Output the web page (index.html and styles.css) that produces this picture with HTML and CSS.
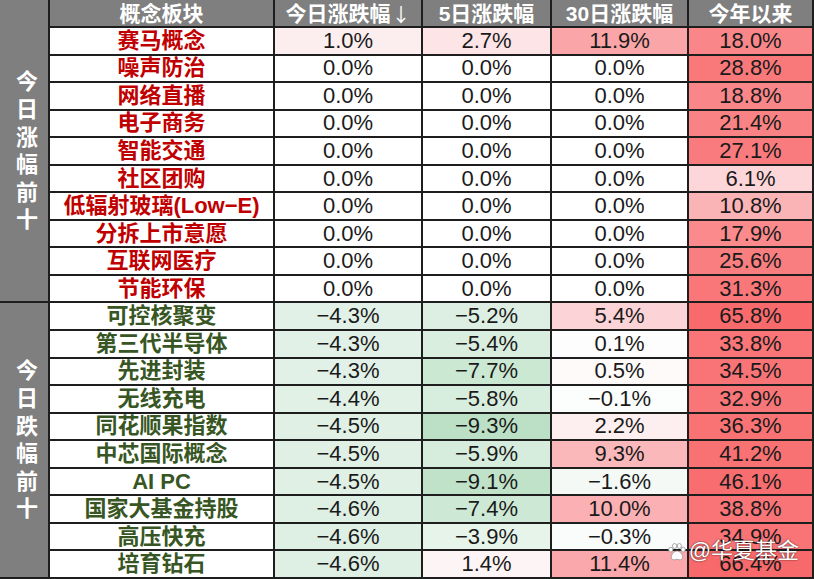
FILE: index.html
```html
<!DOCTYPE html>
<html lang="zh-CN">
<head>
<meta charset="utf-8">
<title>概念板块涨跌幅</title>
<link rel="stylesheet" href="styles.css">
</head>
<body>
<div class="sheet">
  <div class="group group-top">今日涨幅前十</div>
  <div class="group group-bottom">今日跌幅前十</div>

  <div class="hd">概念板块</div>
  <div class="hd">今日涨跌幅<span class="arrow">↓</span></div>
  <div class="hd">5日涨跌幅</div>
  <div class="hd">30日涨跌幅</div>
  <div class="hd">今年以来</div>

  <div class="name up">赛马概念</div>
  <div class="num" style="background:rgb(252,237,239)">1.0%</div>
  <div class="num" style="background:rgb(252,228,231)">2.7%</div>
  <div class="num" style="background:rgb(250,165,168)">11.9%</div>
  <div class="num" style="background:rgb(249,135,138)">18.0%</div>

  <div class="name up">噪声防治</div>
  <div class="num">0.0%</div>
  <div class="num">0.0%</div>
  <div class="num">0.0%</div>
  <div class="num" style="background:rgb(249,120,122)">28.8%</div>

  <div class="name up">网络直播</div>
  <div class="num">0.0%</div>
  <div class="num">0.0%</div>
  <div class="num">0.0%</div>
  <div class="num" style="background:rgb(249,135,137)">18.8%</div>

  <div class="name up">电子商务</div>
  <div class="num">0.0%</div>
  <div class="num">0.0%</div>
  <div class="num">0.0%</div>
  <div class="num" style="background:rgb(249,131,132)">21.4%</div>

  <div class="name up">智能交通</div>
  <div class="num">0.0%</div>
  <div class="num">0.0%</div>
  <div class="num">0.0%</div>
  <div class="num" style="background:rgb(249,123,125)">27.1%</div>

  <div class="name up">社区团购</div>
  <div class="num">0.0%</div>
  <div class="num">0.0%</div>
  <div class="num">0.0%</div>
  <div class="num" style="background:rgb(252,214,216)">6.1%</div>

  <div class="name up">低辐射玻璃(Low−E)</div>
  <div class="num">0.0%</div>
  <div class="num">0.0%</div>
  <div class="num">0.0%</div>
  <div class="num" style="background:rgb(251,180,182)">10.8%</div>

  <div class="name up">分拆上市意愿</div>
  <div class="num">0.0%</div>
  <div class="num">0.0%</div>
  <div class="num">0.0%</div>
  <div class="num" style="background:rgb(250,138,140)">17.9%</div>

  <div class="name up">互联网医疗</div>
  <div class="num">0.0%</div>
  <div class="num">0.0%</div>
  <div class="num">0.0%</div>
  <div class="num" style="background:rgb(249,126,128)">25.6%</div>

  <div class="name up">节能环保</div>
  <div class="num">0.0%</div>
  <div class="num">0.0%</div>
  <div class="num">0.0%</div>
  <div class="num" style="background:rgb(249,119,121)">31.3%</div>

  <div class="name down">可控核聚变</div>
  <div class="num" style="background:rgb(226,241,231)">−4.3%</div>
  <div class="num" style="background:rgb(220,239,226)">−5.2%</div>
  <div class="num" style="background:rgb(252,211,214)">5.4%</div>
  <div class="num" style="background:rgb(248,106,108)">65.8%</div>

  <div class="name down">第三代半导体</div>
  <div class="num" style="background:rgb(226,241,231)">−4.3%</div>
  <div class="num" style="background:rgb(218,238,224)">−5.4%</div>
  <div class="num" style="background:rgb(254,253,253)">0.1%</div>
  <div class="num" style="background:rgb(249,117,119)">33.8%</div>

  <div class="name down">先进封装</div>
  <div class="num" style="background:rgb(226,241,231)">−4.3%</div>
  <div class="num" style="background:rgb(203,232,211)">−7.7%</div>
  <div class="num" style="background:rgb(254,250,250)">0.5%</div>
  <div class="num" style="background:rgb(249,116,118)">34.5%</div>

  <div class="name down">无线充电</div>
  <div class="num" style="background:rgb(225,241,230)">−4.4%</div>
  <div class="num" style="background:rgb(215,237,221)">−5.8%</div>
  <div class="num" style="background:rgb(252,254,253)">−0.1%</div>
  <div class="num" style="background:rgb(249,118,120)">32.9%</div>

  <div class="name down">同花顺果指数</div>
  <div class="num" style="background:rgb(224,240,229)">−4.5%</div>
  <div class="num" style="background:rgb(188,224,197)">−9.3%</div>
  <div class="num" style="background:rgb(253,238,240)">2.2%</div>
  <div class="num" style="background:rgb(249,115,117)">36.3%</div>

  <div class="name down">中芯国际概念</div>
  <div class="num" style="background:rgb(224,240,229)">−4.5%</div>
  <div class="num" style="background:rgb(214,236,220)">−5.9%</div>
  <div class="num" style="background:rgb(251,184,186)">9.3%</div>
  <div class="num" style="background:rgb(248,113,115)">41.2%</div>

  <div class="name down">AI PC</div>
  <div class="num" style="background:rgb(224,240,229)">−4.5%</div>
  <div class="num" style="background:rgb(191,226,200)">−9.1%</div>
  <div class="num" style="background:rgb(244,249,246)">−1.6%</div>
  <div class="num" style="background:rgb(248,110,112)">46.1%</div>

  <div class="name down">国家大基金持股</div>
  <div class="num" style="background:rgb(222,239,227)">−4.6%</div>
  <div class="num" style="background:rgb(205,233,213)">−7.4%</div>
  <div class="num" style="background:rgb(251,177,180)">10.0%</div>
  <div class="num" style="background:rgb(249,116,118)">38.8%</div>

  <div class="name down">高压快充</div>
  <div class="num" style="background:rgb(222,239,227)">−4.6%</div>
  <div class="num" style="background:rgb(230,244,234)">−3.9%</div>
  <div class="num" style="background:rgb(250,252,251)">−0.3%</div>
  <div class="num" style="background:rgb(249,116,118)">34.9%</div>

  <div class="name down">培育钻石</div>
  <div class="num" style="background:rgb(222,239,227)">−4.6%</div>
  <div class="num" style="background:rgb(253,244,245)">1.4%</div>
  <div class="num" style="background:rgb(250,168,171)">11.4%</div>
  <div class="num" style="background:rgb(248,105,107)">66.4%</div>

  <div class="watermark">
    <svg class="paw" viewBox="0 0 20 20" width="19" height="19">
      <ellipse cx="4" cy="8" rx="2.2" ry="2.6"/>
      <ellipse cx="8" cy="4.2" rx="2.2" ry="2.6"/>
      <ellipse cx="13" cy="4.2" rx="2.2" ry="2.6"/>
      <ellipse cx="17" cy="8" rx="2.2" ry="2.6"/>
      <path d="M10.5 9.5c-3.5 0-6 4-6 6.5 0 2 1.6 2.8 3 2.8 1.2 0 2-.6 3-.6s1.8.6 3 .6c1.4 0 3-.8 3-2.8 0-2.5-2.5-6.5-6-6.5z"/>
    </svg>
    <span class="wm-text">@华夏基金</span>
  </div>
</div>
</body>
</html>
```
FILE: styles.css
```css
html, body {
  margin: 0;
  padding: 0;
  background: #ffffff;
}

.sheet {
  position: relative;
  box-sizing: border-box;
  width: 814px;
  height: 579px;
  display: grid;
  grid-template-columns: 48px 223px 146px 127px 135px 123px;
  grid-template-rows: 26px repeat(20, 1fr);
  gap: 2px;
  padding: 0 2px 2px 0;
  background: #1e1e1e;
  font-family: "Liberation Sans", "Noto Sans CJK SC", sans-serif;
}

.group {
  grid-column: 1;
  background: #7f7f7f;
  color: #ffffff;
  font-weight: bold;
  font-size: 22px;
  writing-mode: vertical-rl;
  text-orientation: upright;
  letter-spacing: 5.6px;
  display: flex;
  align-items: center;
  justify-content: center;
  padding-top: 4px;
  box-sizing: border-box;
}

.group-top {
  grid-row: 1 / span 11;
}

.group-bottom {
  grid-row: 12 / span 10;
}

.hd {
  background: #7f7f7f;
  color: #ffffff;
  font-weight: bold;
  font-size: 21px;
  display: flex;
  align-items: center;
  justify-content: center;
  line-height: 1;
}

.arrow {
  display: inline-block;
  font-family: "Noto Sans CJK SC", sans-serif;
  font-weight: normal;
  font-size: 19px;
  line-height: 19px;
  height: 19px;
  margin-left: 1px;
}

.name {
  background: #ffffff;
  font-weight: bold;
  font-size: 22px;
  display: flex;
  align-items: center;
  justify-content: center;
  line-height: 1;
}

.up {
  color: #c00000;
}

.down {
  color: #375623;
}

.num {
  background: #ffffff;
  color: #1a1a1a;
  font-size: 22px;
  display: flex;
  align-items: center;
  justify-content: center;
  line-height: 1;
}

.watermark {
  position: absolute;
  right: 15px;
  bottom: 17px;
  display: flex;
  align-items: center;
  gap: 3px;
  color: #ffffff;
}

.paw {
  fill: #ffffff;
  stroke: #9a9a9a;
  stroke-width: 0.9;
}

.wm-text {
  font-size: 22px;
  line-height: 1;
  text-shadow: 0 0 2px rgba(0, 0, 0, 0.55), 0 0 1px rgba(0, 0, 0, 0.5);
}
```
